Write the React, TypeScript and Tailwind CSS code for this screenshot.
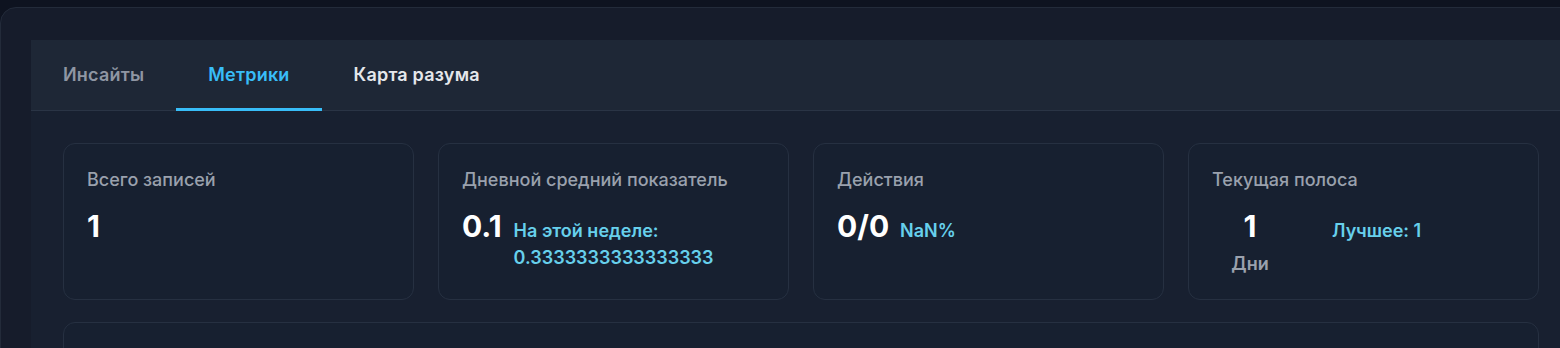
import { ReactNode } from "react";

const TABS = [
  { label: "Инсайты", state: "idle" },
  { label: "Метрики", state: "active" },
  { label: "Карта разума", state: "hover" },
];

function Card({ label, children }: { label: string; children: ReactNode }) {
  return (
    <div className="h-[157px] rounded-xl border border-[#263041] bg-[#172030] p-6 pl-[23px]">
      <div className="text-lg font-medium leading-6 text-[#9aa1ad]">{label}</div>
      <div className="mt-4">{children}</div>
    </div>
  );
}

function Big({ children }: { children: ReactNode }) {
  return <span className="text-3xl font-bold leading-9 text-white">{children}</span>;
}

function Accent({ children }: { children: ReactNode }) {
  return <span className="text-lg font-semibold leading-[27px] text-[#67d0ec]">{children}</span>;
}

export default function App() {
  return (
    <div
      className="h-[348px] w-full overflow-hidden bg-[#0e1320] pt-[7px]"
      style={{ fontFamily: "Inter, 'Noto Sans', sans-serif" }}
    >
      <div className="w-[1604px] rounded-2xl border border-[#232b3a] bg-[#161c2b] pl-[30px] pt-[32px]">
        <div className="w-[1540px]">
          <div className="flex h-[71px] border-b border-[#2a3445] bg-[#1e2736]">
            {TABS.map((t) => (
              <button
                key={t.label}
                className={
                  t.state === "active"
                    ? "relative px-8 text-lg font-semibold tracking-[0.2px] text-[#38bdf8]"
                    : t.state === "hover"
                      ? "relative px-8 text-lg font-semibold tracking-[0.2px] text-[#e5e7eb]"
                      : "relative px-8 text-lg font-semibold tracking-[0.2px] text-[#8f96a3]"
                }
              >
                {t.label}
                {t.state === "active" && (
                  <span className="absolute inset-x-0 -bottom-px h-[3px] bg-[#38bdf8]" />
                )}
              </button>
            ))}
          </div>

          <div className="bg-[#182030] px-8 pt-8">
            <div className="grid grid-cols-4 gap-6">
              <Card label="Всего записей">
                <Big>1</Big>
              </Card>
              <Card label="Дневной средний показатель">
                <div className="flex items-baseline gap-3">
                  <Big>0.1</Big>
                  <Accent>На этой неделе: 0.3333333333333333</Accent>
                </div>
              </Card>
              <Card label="Действия">
                <div className="flex items-baseline gap-[11px]">
                  <Big>0/0</Big>
                  <Accent>NaN%</Accent>
                </div>
              </Card>
              <Card label="Текущая полоса">
                <div className="flex items-baseline">
                  <div className="flex w-[76px] flex-col items-center">
                    <Big>1</Big>
                    <span className="mt-2 text-lg font-semibold leading-6 text-[#9aa1ad]">Дни</span>
                  </div>
                  <div className="ml-[44px]">
                    <Accent>Лучшее: 1</Accent>
                  </div>
                </div>
              </Card>
            </div>
            <div className="mt-[22px] h-[60px] rounded-xl border border-[#263041] bg-[#172030]" />
          </div>
        </div>
      </div>
    </div>
  );
}
